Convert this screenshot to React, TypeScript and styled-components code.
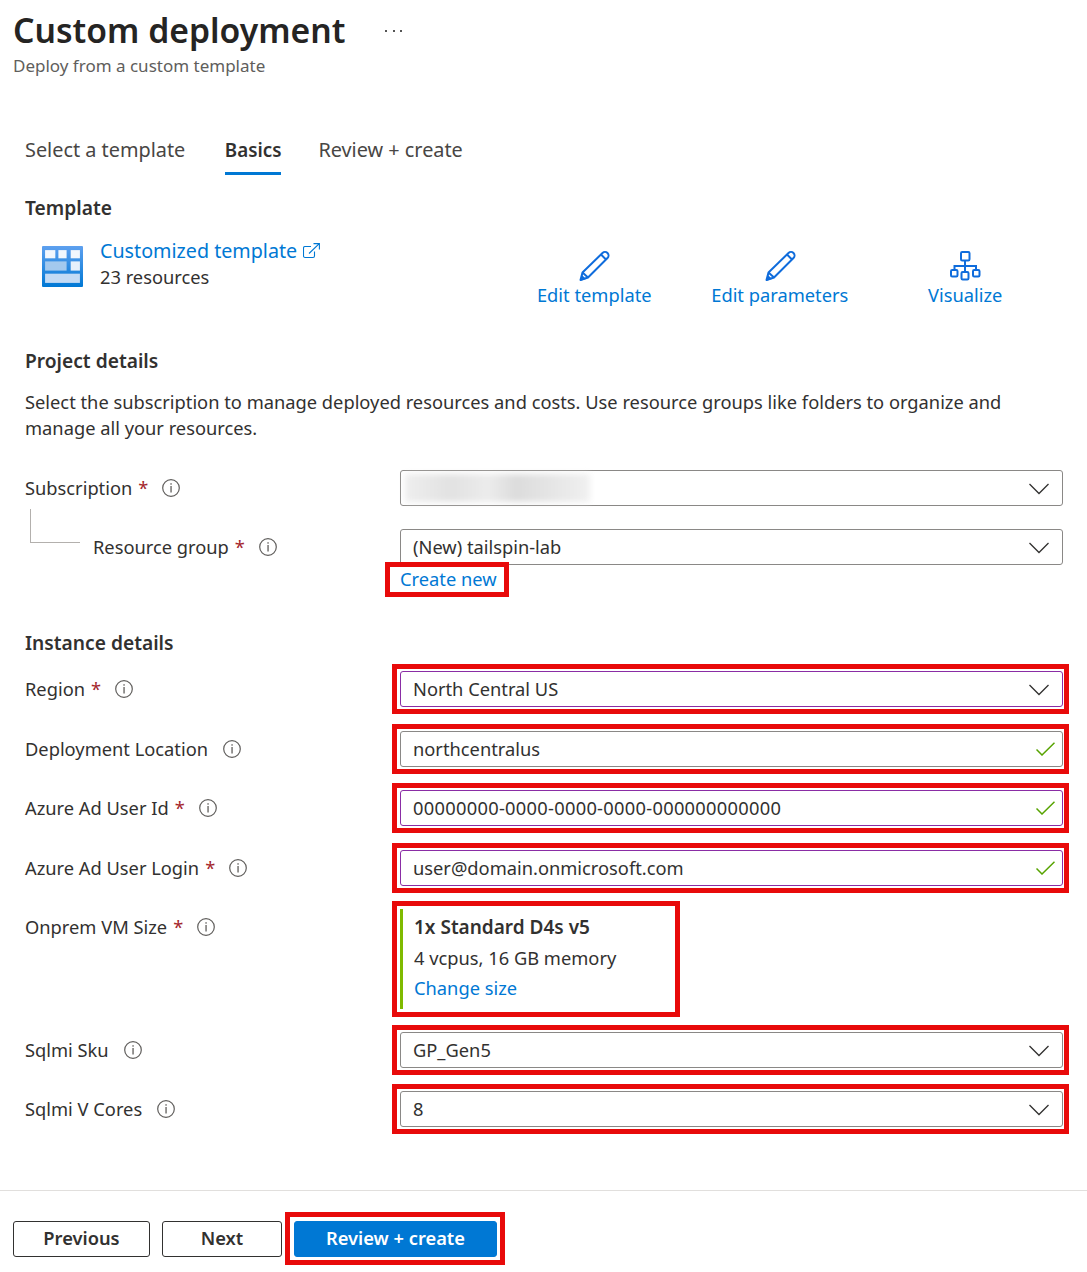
import { ReactNode } from "react"
import styled, { createGlobalStyle } from "styled-components"

const GlobalStyle = createGlobalStyle`
  html, body {
    margin: 0;
    padding: 0;
    background: #fff;
  }
  body {
    font-family: "Noto Sans", "Open Sans", sans-serif;
    font-size: 18.3px;
    color: #323130;
  }
  * {
    box-sizing: border-box;
  }
`

const Page = styled.div`
  display: flex;
  flex-direction: column;
  height: 1272px;
  overflow: hidden;
`

const Header = styled.header`
  padding: 7px 0 0 13px;
  height: 130px;
`

const TitleRow = styled.div`
  display: flex;
  align-items: center;
  gap: 40px;
  height: 46px;
`

const Title = styled.h1`
  margin: 0;
  font-size: 33.7px;
  font-weight: 600;
  line-height: 46px;
  color: #252423;
`

const MoreDots = styled.span`
  display: flex;
  gap: 5.5px;
  margin-top: 2px;
  & > i {
    width: 2px;
    height: 2px;
    background: #555;
  }
`

const Subtitle = styled.div`
  margin-top: 1px;
  font-size: 17px;
  line-height: 24px;
  color: #605e5c;
`

const Tabs = styled.nav`
  display: flex;
  padding-left: 25px;
  height: 45px;
`

const Tab = styled.div<{ $active?: boolean }>`
  margin-right: ${(p) => (p.$active ? "37px" : "39.5px")};
  height: 45px;
  font-size: ${(p) => (p.$active ? "18.8px" : "19.85px")};
  line-height: 40px;
  font-weight: ${(p) => (p.$active ? 600 : 400)};
  color: ${(p) => (p.$active ? "#323130" : "#484644")};
  border-bottom: 3px solid ${(p) => (p.$active ? "#0078d4" : "transparent")};
`

const Content = styled.main`
  flex: 1;
  padding: 0 24px 0 25px;
`

const SectionTitle = styled.h2<{ $top: number }>`
  margin: ${(p) => p.$top}px 0 0;
  font-size: 19.2px;
  font-weight: 600;
  line-height: 26px;
`

const TemplateRow = styled.div`
  display: flex;
  justify-content: space-between;
  height: 104px;
  padding: 17px 0 0 17px;
`

const TemplateInfo = styled.div`
  display: flex;
  gap: 17px;
`

const TemplateIcon = styled.svg`
  margin-top: 8px;
`

const TemplateText = styled.div`
  line-height: 26px;
`

const Link = styled.a`
  color: #0078d4;
  text-decoration: none;
`

const TemplateLink = styled(Link)`
  display: flex;
  align-items: center;
  gap: 6px;
  font-size: 19.7px;
`

const Actions = styled.div`
  display: flex;
  padding: 12px 5px 0 0;
`

const Action = styled(Link)`
  display: flex;
  flex-direction: column;
  align-items: center;
  width: 185.5px;
  line-height: 26px;
`

const ActionIcon = styled.svg`
  display: block;
`

const Paragraph = styled.p`
  margin: 15px 0 0;
  line-height: 26px;
`

const FormRow = styled.div<{ $top: number }>`
  display: grid;
  grid-template-columns: 375px 1fr;
  align-items: start;
  margin-top: ${(p) => p.$top}px;
`

const LabelWrap = styled.div<{ $nested?: boolean }>`
  position: relative;
  display: flex;
  align-items: center;
  height: 36px;
  padding-left: ${(p) => (p.$nested ? "68px" : "0")};
  ${(p) =>
    p.$nested &&
    `&::before {
      content: "";
      position: absolute;
      left: 5px;
      top: -20px;
      width: 49px;
      height: 33px;
      border-left: 1px solid #b3b0ad;
      border-bottom: 1px solid #b3b0ad;
    }`}
`

const LabelText = styled.span`
  margin-top: -2px;
`

const Star = styled.span`
  margin: -2px -1px 0 6px;
  color: #a4262c;
`

const InfoIcon = styled.svg`
  margin-left: 15px;
`

const Field = styled.div<{ $focus?: boolean }>`
  display: flex;
  align-items: center;
  justify-content: space-between;
  height: 36px;
  padding: 0 13px 0 12px;
  border: 1px solid ${(p) => (p.$focus ? "#8a2da5" : "#8a8886")};
  border-radius: 3px;
  background: #fff;
  line-height: 34px;
  white-space: nowrap;
`

const Digits = styled.span`
  letter-spacing: 0.28px;
`

const Marked = styled.div<{ $left: number; $right: number; $y: number; $bottom?: number; $width?: number }>`
  position: relative;
  width: ${(p) => (p.$width ? `${p.$width}px` : "auto")};
  &::after {
    content: "";
    position: absolute;
    top: ${(p) => -p.$y}px;
    bottom: ${(p) => -(p.$bottom ?? p.$y)}px;
    left: ${(p) => -p.$left}px;
    right: ${(p) => -p.$right}px;
    border: 5px solid #e80a0a;
    pointer-events: none;
  }
`

const Blurred = styled.div`
  width: 185px;
  height: 28px;
  margin-left: -8px;
  background: linear-gradient(90deg, #eee, #e2e2e2 25%, #ececec 45%, #dcdcdc 60%, #e6e6e6 80%, #f0f0f0);
  filter: blur(3px);
`

const CreateNew = styled(Link)`
  display: block;
  width: 97px;
  height: 26px;
  margin-top: 1px;
  line-height: 26px;
  white-space: nowrap;
`

const SizeCard = styled.div`
  height: 100px;
  padding-left: 11px;
  border-left: 3px solid #7fba00;
  line-height: 30px;
`

const SizeName = styled.div`
  margin-bottom: -2px;
  font-size: 19px;
  font-weight: 600;
  line-height: 36px;
`

const Footer = styled.footer`
  display: flex;
  align-items: flex-start;
  gap: 12px;
  height: 82px;
  padding: 30px 0 0 13px;
  border-top: 1px solid #e1dfdd;
`

const Button = styled.button<{ $primary?: boolean; $width: number }>`
  display: block;
  width: ${(p) => p.$width}px;
  height: 36px;
  padding: 0 0 3px;
  border: 1px solid ${(p) => (p.$primary ? "#0078d4" : "#323130")};
  border-radius: 3px;
  background: ${(p) => (p.$primary ? "#0078d4" : "#fff")};
  color: ${(p) => (p.$primary ? "#fff" : "#323130")};
  font-family: inherit;
  font-size: 18.3px;
  font-weight: 600;
`

const ChevronIcon = styled.svg`
  margin-top: 1px;
`

const Chevron = () => (
  <ChevronIcon width="20" height="12" viewBox="0 0 20 12">
    <path d="M0.5 1 L10 10.5 L19.5 1" fill="none" stroke="#323130" strokeWidth="1.3" />
  </ChevronIcon>
)

const CheckIcon = styled.svg`
  margin-right: -6px;
`

const Check = () => (
  <CheckIcon width="19" height="14" viewBox="0 0 19 14">
    <path d="M0.5 7.5 L6 13 L18.5 0.8" fill="none" stroke="#57a300" strokeWidth="1.5" />
  </CheckIcon>
)

const Info = () => (
  <InfoIcon width="18" height="18" viewBox="0 0 18 18">
    <circle cx="9" cy="9" r="8.3" fill="none" stroke="#605e5c" strokeWidth="1.2" />
    <rect x="8.4" y="4.2" width="1.3" height="1.5" fill="#605e5c" />
    <rect x="8.4" y="7" width="1.3" height="6.5" fill="#605e5c" />
  </InfoIcon>
)

const Pencil = () => (
  <ActionIcon width="32" height="32" viewBox="0 0 32 32">
    <g fill="none" stroke="#0f6cdc" strokeWidth="2">
      <path d="M4.5 22.5 L24.5 3 a3.4 3.4 0 0 1 5 5 L10 27.5 L2.5 30 Z" strokeLinejoin="round" />
      <path d="M4.5 22.5 L10 27.5 M23 4.5 L28 9.5" />
    </g>
    <path d="M2 31 L4 25 L8 29 Z" fill="#0f6cdc" />
  </ActionIcon>
)

const Hierarchy = () => (
  <ActionIcon width="32" height="32" viewBox="0 0 32 32">
    <g fill="none" stroke="#0f6cdc" strokeWidth="2">
      <rect x="12" y="2" width="8.5" height="8.5" rx="1.2" />
      <rect x="2" y="20" width="6.5" height="6.5" rx="1.2" />
      <rect x="12.5" y="22" width="7" height="7.5" rx="1.2" />
      <rect x="24" y="20" width="6.5" height="6.5" rx="1.2" />
      <path d="M16 10.5 V22 M5.5 20 V16 H27 V20" />
    </g>
  </ActionIcon>
)

const ExternalLink = () => (
  <svg width="17" height="16" viewBox="0 0 17 16">
    <g fill="none" stroke="#0078d4" strokeWidth="1.1">
      <path d="M8 3.5 H2 a1.5 1.5 0 0 0 -1.5 1.5 V13 a1.5 1.5 0 0 0 1.5 1.5 H10 a1.5 1.5 0 0 0 1.5 -1.5 V8.5" />
      <path d="M6 10.5 L16 0.8 M10.5 0.6 H16.4 V6.5" />
    </g>
  </svg>
)

const TemplateGlyph = () => (
  <TemplateIcon width="41" height="41" viewBox="0 0 40 40">
    <defs>
      <linearGradient id="frame" x1="0" y1="0" x2="0" y2="1">
        <stop offset="0" stopColor="#5ea0ef" />
        <stop offset="1" stopColor="#0078d4" />
      </linearGradient>
    </defs>
    <rect width="40" height="40" rx="1" fill="url(#frame)" />
    <rect x="3" y="4" width="10" height="8" fill="#f2f7fd" />
    <rect x="16" y="4" width="8" height="8" fill="#f2f7fd" />
    <rect x="28" y="4" width="9" height="8" fill="#f2f7fd" />
    <rect x="3" y="15" width="21" height="9" fill="#a3c9ee" />
    <rect x="28" y="15" width="9" height="9" fill="#e6f0fb" />
    <rect x="3" y="27" width="34" height="9" fill="#c3dbf5" />
  </TemplateIcon>
)

function Label({ text, required, nested }: { text: string; required?: boolean; nested?: boolean }) {
  return (
    <LabelWrap $nested={nested}>
      <LabelText>{text}</LabelText>
      {required && <Star>*</Star>}
      <Info />
    </LabelWrap>
  )
}

function MarkedField({ children, focus }: { children: ReactNode; focus?: boolean }) {
  return (
    <Marked $left={8} $right={6} $y={7}>
      <Field $focus={focus}>{children}</Field>
    </Marked>
  )
}

export default function App() {
  return (
    <Page>
      <GlobalStyle />
      <Header>
        <TitleRow>
          <Title>Custom deployment</Title>
          <MoreDots>
            <i />
            <i />
            <i />
          </MoreDots>
        </TitleRow>
        <Subtitle>Deploy from a custom template</Subtitle>
      </Header>
      <Tabs>
        <Tab>Select a template</Tab>
        <Tab $active>Basics</Tab>
        <Tab>Review + create</Tab>
      </Tabs>
      <Content>
        <SectionTitle $top={20}>Template</SectionTitle>
        <TemplateRow>
          <TemplateInfo>
            <TemplateGlyph />
            <TemplateText>
              <TemplateLink href="#">
                Customized template <ExternalLink />
              </TemplateLink>
              23 resources
            </TemplateText>
          </TemplateInfo>
          <Actions>
            <Action href="#">
              <Pencil />
              Edit template
            </Action>
            <Action href="#">
              <Pencil />
              Edit parameters
            </Action>
            <Action href="#">
              <Hierarchy />
              Visualize
            </Action>
          </Actions>
        </TemplateRow>
        <SectionTitle $top={23}>Project details</SectionTitle>
        <Paragraph>
          Select the subscription to manage deployed resources and costs. Use resource groups like folders to organize
          and manage all your resources.
        </Paragraph>
        <FormRow $top={29}>
          <Label text="Subscription" required />
          <Field>
            <Blurred />
            <Chevron />
          </Field>
        </FormRow>
        <FormRow $top={23}>
          <Label text="Resource group" required nested />
          <div>
            <Field>
              (New) tailspin-lab
              <Chevron />
            </Field>
            <Marked $left={15} $right={12} $y={4} $bottom={5} $width={97}>
              <CreateNew href="#">Create new</CreateNew>
            </Marked>
          </div>
        </FormRow>
        <SectionTitle $top={38}>Instance details</SectionTitle>
        <FormRow $top={15}>
          <Label text="Region" required />
          <MarkedField focus>
            North Central US
            <Chevron />
          </MarkedField>
        </FormRow>
        <FormRow $top={24}>
          <Label text="Deployment Location" />
          <MarkedField>
            northcentralus
            <Check />
          </MarkedField>
        </FormRow>
        <FormRow $top={23}>
          <Label text="Azure Ad User Id" required />
          <MarkedField focus>
            <Digits>00000000-0000-0000-0000-000000000000</Digits>
            <Check />
          </MarkedField>
        </FormRow>
        <FormRow $top={24}>
          <Label text="Azure Ad User Login" required />
          <MarkedField focus>
            user@domain.onmicrosoft.com
            <Check />
          </MarkedField>
        </FormRow>
        <FormRow $top={23}>
          <Label text="Onprem VM Size" required />
          <Marked $left={8} $right={8} $y={8} $width={272}>
            <SizeCard>
              <SizeName>1x Standard D4s v5</SizeName>
              <div>4 vcpus, 16 GB memory</div>
              <Link href="#">Change size</Link>
            </SizeCard>
          </Marked>
        </FormRow>
        <FormRow $top={23}>
          <Label text="Sqlmi Sku" />
          <MarkedField>
            GP_Gen5
            <Chevron />
          </MarkedField>
        </FormRow>
        <FormRow $top={23}>
          <Label text="Sqlmi V Cores" />
          <MarkedField>
            8
            <Chevron />
          </MarkedField>
        </FormRow>
      </Content>
      <Footer>
        <Button $width={137}>Previous</Button>
        <Button $width={120}>Next</Button>
        <Marked $left={9} $right={8} $y={9} $bottom={8}>
          <Button $primary $width={203}>
            Review + create
          </Button>
        </Marked>
      </Footer>
    </Page>
  )
}
